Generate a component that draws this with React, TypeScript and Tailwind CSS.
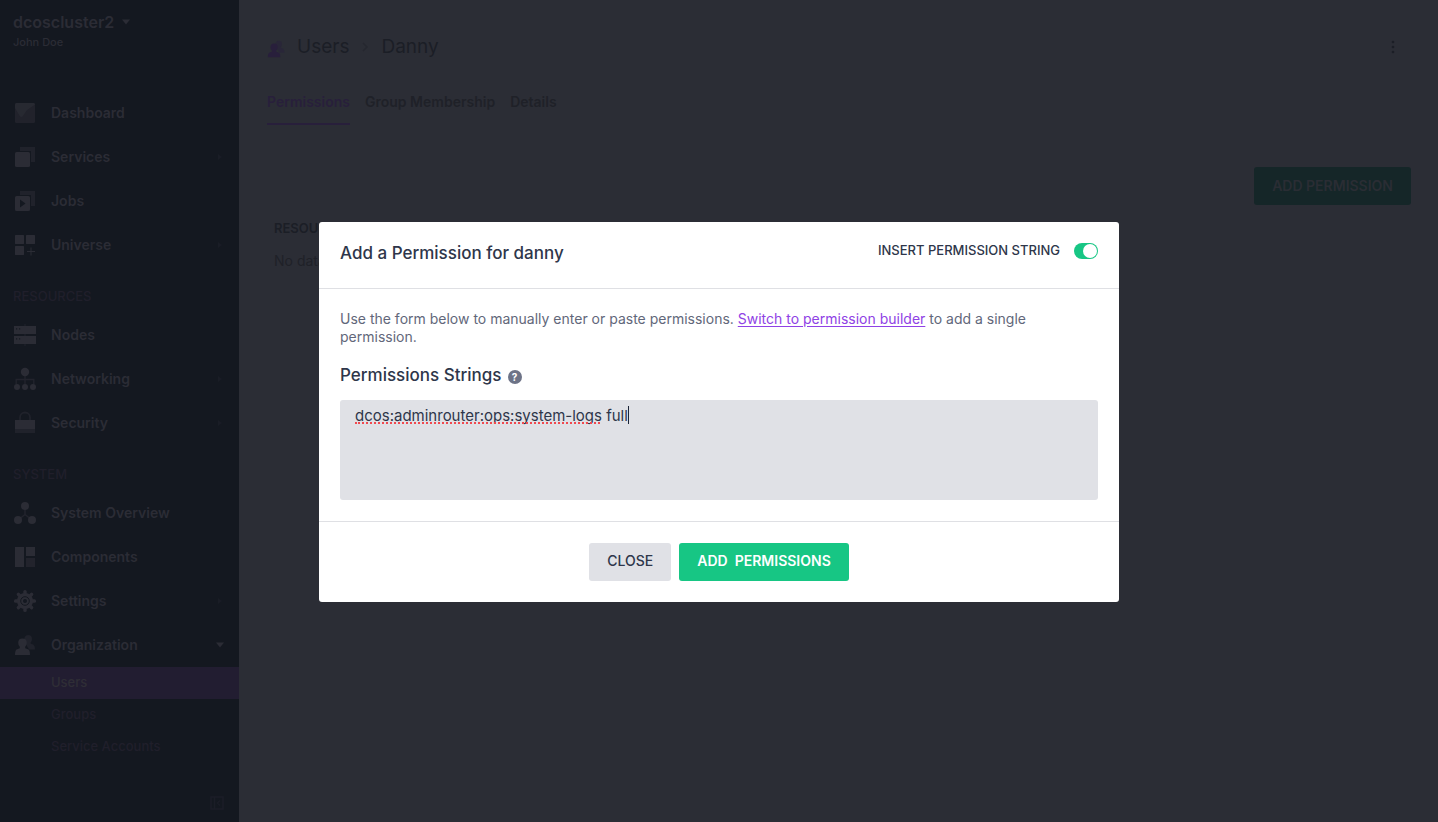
import React, { useState } from "react";

type IconName =
  | "dashboard"
  | "services"
  | "jobs"
  | "universe"
  | "nodes"
  | "networking"
  | "security"
  | "overview"
  | "components"
  | "settings"
  | "users";

const shapes: Record<IconName, React.ReactNode> = {
  dashboard: (
    <>
      <rect x="2" y="2" width="20" height="20" rx="1.5" opacity="0.55" />
      <path
        d="M3.5 2h17A1.5 1.5 0 0 1 22 3.5L14 9 9.5 15.500Q8 16.5 6.8 15L2 7V3.5A1.5 1.5 0 0 1 3.5 2Z"
        opacity="0.7"
      />
    </>
  ),
  services: (
    <>
      <path d="M7 2h15v15h-4V6H7Z" opacity="0.5" />
      <rect x="2" y="7" width="15" height="15" rx="1.5" />
    </>
  ),
  jobs: (
    <>
      <path d="M7 2h15v15h-4V6H7Z" opacity="0.5" />
      <path
        fillRule="evenodd"
        d="M3.5 7h12A1.5 1.5 0 0 1 17 8.5v12a1.5 1.5 0 0 1-1.5 1.5h-12A1.5 1.5 0 0 1 2 20.5v-12A1.5 1.5 0 0 1 3.5 7ZM7 10.5v8l5.5-4Z"
      />
    </>
  ),
  universe: (
    <>
      <rect x="2" y="2" width="9" height="9" rx="0.5" />
      <rect x="13" y="2" width="9" height="9" rx="0.5" />
      <rect x="2" y="13" width="9" height="9" rx="0.5" />
      <path d="M17.500 14.500h1v3.500H22v1h-3.500v3.500h-1V19H14v-1h3.500Z" />
    </>
  ),
  nodes: (
    <>
      <path d="M11.500 1h1v22h-1Z" opacity="0.6" />
      <path fillRule="evenodd" d="M1 3h22v8H1ZM3 5.200v1.200h1.200V5.200ZM6 5.200v1.200h1.200V5.200Z" />
      <path
        fillRule="evenodd"
        d="M1 13h22v8H1ZM3 15.200v1.200h1.200v-1.200ZM6 15.200v1.200h1.200v-1.200Z"
      />
    </>
  ),
  networking: (
    <>
      <path
        d="M11.300 7h1.400v4.800H21.500V17h-1.400v-3.800h-7.400V17h-1.400v-3.800H3.900V17H2.500v-5.200h8.800Z"
        opacity="0.6"
      />
      <circle cx="12" cy="5" r="4.200" />
      <circle cx="4" cy="20" r="3" />
      <circle cx="12" cy="20" r="3" />
      <circle cx="20" cy="20" r="3" />
    </>
  ),
  security: (
    <>
      <path
        d="M7 10V6.500a5 5 0 0 1 10 0V10"
        fill="none"
        stroke="currentColor"
        strokeWidth="1.800"
        opacity="0.5"
      />
      <rect x="2" y="9" width="20" height="9" />
      <rect x="2" y="18" width="20" height="4" opacity="0.5" />
    </>
  ),
  overview: (
    <>
      <path
        d="M12 5v8.500M12 13.500l-7 5.500M12 13.500l7 5.500"
        fill="none"
        stroke="currentColor"
        strokeWidth="1.500"
        opacity="0.6"
      />
      <circle cx="12" cy="5" r="4" />
      <circle cx="5" cy="19" r="4" />
      <circle cx="19" cy="19" r="4" />
    </>
  ),
  components: (
    <>
      <rect x="2" y="2" width="9" height="20" />
      <rect x="13" y="2" width="9" height="9" />
      <rect x="13" y="13" width="9" height="9" opacity="0.6" />
    </>
  ),
  settings: (
    <>
      {[0, 45, 90, 135].map((angle) => (
        <rect
          key={angle}
          x="10.300"
          y="1"
          width="3.400"
          height="22"
          rx="1.500"
          transform={`rotate(${angle} 12 12)`}
        />
      ))}
      <circle cx="12" cy="12" r="8" />
      <circle cx="12" cy="12" r="4.300" fill="none" stroke="#141820" strokeWidth="1" />
      <circle cx="12" cy="12" r="2" fill="#141820" />
    </>
  ),
  users: (
    <>
      <path
        d="M15 2q4 0 4 4 0 2.400-1.400 3.600v1l2.900 1.200Q22 12.800 22 16.500h-6L11 8Q11 2 15 2Z"
        opacity="0.5"
      />
      <path d="M9.500 5.500q4.300 0 4.300 4.300 0 2.600-1.600 4v1.400l3.400 1.300Q17 17.500 17 22H2q0-4.500 1.500-5.500l3.300-1.300v-1.400q-1.600-1.400-1.600-4 0-4.300 4.300-4.300Z" />
    </>
  ),
};

function Icon({ name }: { name: IconName }) {
  return (
    <svg viewBox="0 0 24 24" className="size-6 shrink-0" fill="currentColor" aria-hidden="true">
      {shapes[name]}
    </svg>
  );
}

type Arrow = "right" | "down";

function NavItem({ icon, label, arrow }: { icon: IconName; label: string; arrow?: Arrow }) {
  return (
    <li>
      <a href="#" className="flex h-11 items-center gap-3.5 px-[13px] text-sm font-semibold">
        <Icon name={icon} />
        <span className="grow">{label}</span>
        {arrow && (
          <svg
            viewBox="0 0 8 8"
            className={arrow === "down" ? "mr-0.5 size-2" : "mr-0.5 size-2 text-[#1a1d26]"}
            fill="currentColor"
            aria-hidden="true"
          >
            {arrow === "down" ? <path d="M0 1.500h8L4 6.500Z" /> : <path d="M2 1l4 3-4 3Z" />}
          </svg>
        )}
      </a>
    </li>
  );
}

function NavHeading({ children }: { children: React.ReactNode }) {
  return (
    <h2 className="flex h-[46px] items-center px-[13px] pt-3.5 text-[13px] font-medium text-[#201f2b]">
      {children}
    </h2>
  );
}

function Sidebar() {
  return (
    <nav className="flex w-[239px] shrink-0 flex-col bg-[#141820] text-[#2b2c35]">
      <header className="h-[91px] px-[13px] pt-3">
        <button type="button" className="flex items-center gap-2 text-base leading-5 font-semibold">
          dcoscluster2
          <svg viewBox="0 0 8 8" className="size-2" fill="currentColor" aria-hidden="true">
            <path d="M0 1.500h8L4 6.500Z" />
          </svg>
        </button>
        <p className="mt-0.5 text-[11px] leading-4 font-medium">John Doe</p>
      </header>
      <ul>
        <NavItem icon="dashboard" label="Dashboard" />
        <NavItem icon="services" label="Services" arrow="right" />
        <NavItem icon="jobs" label="Jobs" />
        <NavItem icon="universe" label="Universe" arrow="right" />
      </ul>
      <NavHeading>RESOURCES</NavHeading>
      <ul>
        <NavItem icon="nodes" label="Nodes" />
        <NavItem icon="networking" label="Networking" arrow="right" />
        <NavItem icon="security" label="Security" arrow="right" />
      </ul>
      <NavHeading>SYSTEM</NavHeading>
      <ul>
        <NavItem icon="overview" label="System Overview" />
        <NavItem icon="components" label="Components" />
        <NavItem icon="settings" label="Settings" arrow="right" />
        <NavItem icon="users" label="Organization" arrow="down" />
      </ul>
      <ul className="text-[13px] font-medium text-[#201f2b]">
        <li>
          <a href="#" className="flex h-8 items-center bg-[#221d31] pl-[51px] text-[#2f2e36]">
            Users
          </a>
        </li>
        <li>
          <a href="#" className="flex h-8 items-center pl-[51px]">
            Groups
          </a>
        </li>
        <li>
          <a href="#" className="flex h-8 items-center pl-[51px]">
            Service Accounts
          </a>
        </li>
      </ul>
      <button
        type="button"
        aria-label="Collapse sidebar"
        className="mt-auto mr-[15px] mb-3 self-end text-[#1b1d27]"
      >
        <svg viewBox="0 0 14 14" className="size-3.5" fill="none" stroke="currentColor" strokeWidth="1.500">
          <path d="M1 1h12v12H1ZM4.500 1v12M10 4.500L7.500 7l2.500 2.500" />
        </svg>
      </button>
    </nav>
  );
}

function UserPage() {
  return (
    <main className="min-w-0 grow pt-8 pr-[27px] pl-7 text-[#1b1e26]">
      <header className="flex h-[30px] items-center">
        <span className="mt-1 text-[#281f3b]">
          <svg viewBox="2 0 22 24" className="h-5 w-5" fill="currentColor" aria-hidden="true">
            {shapes.users}
          </svg>
        </span>
        <h1 className="flex items-center text-[19px]">
          <span className="ml-2.5">Users</span>
          <svg
            viewBox="0 0 8 12"
            className="mx-3 h-3 w-2 text-[#25272f]"
            fill="none"
            stroke="currentColor"
            strokeWidth="1.500"
            aria-hidden="true"
          >
            <path d="M2 2l4 4-4 4" />
          </svg>
          <span>Danny</span>
        </h1>
        <button type="button" aria-label="More actions" className="mr-4 ml-auto">
          <svg viewBox="0 0 4 14" className="h-3.5 w-1" fill="currentColor">
            <circle cx="2" cy="2" r="1.300" />
            <circle cx="2" cy="7" r="1.300" />
            <circle cx="2" cy="12" r="1.300" />
          </svg>
        </button>
      </header>
      <div className="mt-[30px] flex gap-[15px] text-sm font-semibold text-[#1f2128]">
        <a href="#" className="h-[33px] border-b-2 border-[#281f3b] text-[#281f3b]">
          Permissions
        </a>
        <a href="#">Group Membership</a>
        <a href="#">Details</a>
      </div>
      <div className="mt-[42px] flex justify-end">
        <button
          type="button"
          className="h-[38px] rounded-[3px] bg-[#152628] px-[18px] text-sm font-semibold text-[#2a2d34]"
        >
          ADD PERMISSION
        </button>
      </div>
      <table className="mt-3 ml-[7px] text-left">
        <thead>
          <tr>
            <th className="h-6 text-[13px] font-semibold">RESOURCE</th>
          </tr>
        </thead>
        <tbody>
          <tr>
            <td className="h-10 text-sm text-[#1f2128]">No data</td>
          </tr>
        </tbody>
      </table>
    </main>
  );
}

const initialPermission = "dcos:adminrouter:ops:system-logs full";

function PermissionDialog() {
  const [asString, setAsString] = useState(true);
  const [value, setValue] = useState(initialPermission);

  return (
    <section
      role="dialog"
      aria-modal="true"
      aria-labelledby="dialog-title"
      className="w-full max-w-[800px] rounded-[3px] bg-white text-[#2e364a]"
    >
      <header className="flex h-[67px] items-start justify-between border-b border-[#dfe0e4] px-[21px] pt-[19px]">
        <h2 id="dialog-title" className="text-[17px] leading-6 font-medium">
          Add a Permission for danny
        </h2>
        <label className="flex h-5 items-center gap-3.5 text-[13px] font-medium">
          INSERT PERMISSION STRING
          <input
            type="checkbox"
            role="switch"
            checked={asString}
            onChange={(e) => setAsString(e.target.checked)}
            className="peer sr-only"
          />
          <span className="flex h-4 w-6 items-center rounded-full bg-[#c5c8d0] px-px peer-checked:justify-end peer-checked:bg-[#17c684]">
            <span className="size-3.5 rounded-full bg-white" />
          </span>
        </label>
      </header>
      <div className="px-[21px] py-[21px]">
        <p className="text-sm leading-[18px] text-[#62677a]">
          Use the form below to manually enter or paste permissions.{" "}
          <a href="#" className="text-[#8f42e5] underline underline-offset-2">
            Switch to permission builder
          </a>{" "}
          to add a single permission.
        </p>
        <div className="mt-[17px] flex h-6 items-center gap-1.5">
          <label htmlFor="permission-strings" className="text-[17px] leading-6 font-medium">
            Permissions Strings
          </label>
          <button
            type="button"
            aria-label="Help"
            className="mt-1 flex size-3.5 items-center justify-center rounded-full bg-[#6d7387] text-[10px] font-bold text-white"
          >
            ?
          </button>
        </div>
        <div className="relative mt-[13px]">
          <textarea
            id="permission-strings"
            value={value}
            onChange={(e) => setValue(e.target.value)}
            spellCheck={false}
            className="block h-[100px] w-full resize-none rounded-[3px] bg-[#e0e1e6] px-[15px] py-1.5 text-[15px] leading-5 outline-none"
          />
          {value === initialPermission && (
            <div
              aria-hidden="true"
              className="pointer-events-none absolute top-1.5 left-[15px] flex items-start gap-7"
            >
              <span className="h-[18px] w-[245px] border-b-2 border-dotted border-[#f0484f]" />
              <span className="h-[18px] w-px bg-[#1b2437]" />
            </div>
          )}
        </div>
      </div>
      <footer className="flex justify-center gap-2 border-t border-[#dfe0e4] py-[21px] text-sm">
        <button type="button" className="h-[38px] rounded-[3px] bg-[#e0e1e6] px-[18px] pb-0.5 font-medium">
          CLOSE
        </button>
        <button
          type="button"
          className="h-[38px] rounded-[3px] bg-[#17c684] px-[18px] pb-0.5 font-semibold whitespace-pre text-white"
        >
          {"ADD  PERMISSIONS"}
        </button>
      </footer>
    </section>
  );
}

export default function App() {
  return (
    <div className="flex min-h-screen bg-[#2b2d35] font-['Inter',sans-serif]">
      <Sidebar />
      <UserPage />
      <div className="fixed inset-0 flex items-center justify-center pt-0.5">
        <PermissionDialog />
      </div>
    </div>
  );
}
